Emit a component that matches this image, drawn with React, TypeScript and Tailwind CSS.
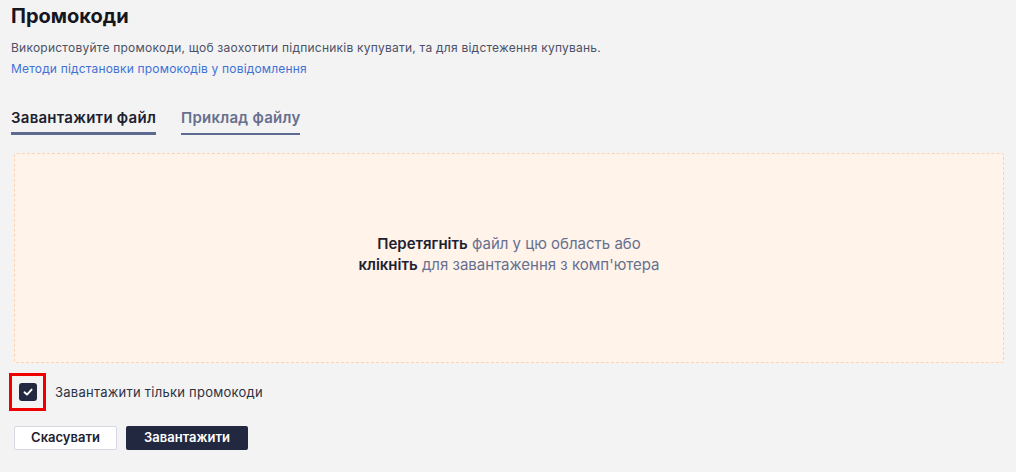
import { useState } from 'react';

const tabs = ['Завантажити файл', 'Приклад файлу'];

const CheckIcon = () => (
  <svg width="12" height="12" viewBox="0 0 12 12" fill="none">
    <path
      d="M2.5 6.3 L5 8.6 L9.6 3.6"
      stroke="#ffffff"
      strokeWidth="1.9"
      strokeLinecap="round"
      strokeLinejoin="round"
    />
  </svg>
);

const App = () => {
  const [activeTab, setActiveTab] = useState(0);
  const [onlyCodes, setOnlyCodes] = useState(true);

  return (
    <div
      className="min-h-[472px] w-full bg-[#f3f3f3] px-[11px] pt-[2px] text-[#1d2130]"
      style={{ fontFamily: 'Inter, "Noto Sans", sans-serif' }}
    >
      <h1 className="text-[20px] font-bold leading-[28px] text-[#15171f]">Промокоди</h1>
      <p className="mt-[10px] text-[12px] leading-[16px] tracking-[0.24px] text-[#4b5166]">
        Використовуйте промокоди, щоб заохотити підписників купувати, та для
        відстеження купувань.
      </p>
      <a className="mt-[5px] block text-[12px] leading-[16px] tracking-[0.18px] text-[#3f72d6]">
        Методи підстановки промокодів у повідомлення
      </a>

      <div className="mt-[31px] flex">
        {tabs.map((tab, i) => (
          <button
            key={tab}
            onClick={() => setActiveTab(i)}
            className={`flex flex-col items-stretch ${i === 0 ? '' : 'pl-[25px]'} ${
              activeTab === i ? 'text-[#1d2130]' : 'text-[#66708f]'
            }`}
          >
            <span className="text-[15px] font-semibold leading-[20px] tracking-[0.25px]">
              {tab}
            </span>
            <span className="mt-[3px] flex h-[4px] items-end">
              <span
                className={`w-full bg-[#5e6b90] ${
                  activeTab === i ? 'h-[3px]' : 'h-[2px]'
                }`}
              />
            </span>
          </button>
        ))}
      </div>

      <div className="ml-[3px] mr-[1px] mt-[18px] flex h-[210px] flex-col items-center justify-center rounded-[3px] border border-dashed border-[#fbd3b2] bg-[#fff3ea] pb-[8px] text-[15px] leading-[21px]">
        <p>
          <span className="font-semibold text-[#1d2130]">Перетягніть</span>{' '}
          <span className="text-[#66708f]">файл у цю область або</span>
        </p>
        <p>
          <span className="font-semibold text-[#1d2130]">клікніть</span>{' '}
          <span className="text-[#66708f]">для завантаження з комп'ютера</span>
        </p>
      </div>

      <label className="mt-[10px] flex items-center gap-[9px]">
        <span className="-ml-[2px] flex h-[38px] w-[37px] items-center justify-center border-[3px] border-[#ee0000]">
          <span
            onClick={() => setOnlyCodes(!onlyCodes)}
            className={`flex h-[18px] w-[18px] items-center justify-center rounded-[3px] ${
              onlyCodes ? 'bg-[#222840]' : 'border border-[#9aa0b3] bg-white'
            }`}
          >
            {onlyCodes && <CheckIcon />}
          </span>
        </span>
        <span className="text-[13px] leading-[18px] tracking-[0.25px] text-[#2c3142]">
          Завантажити тільки промокоди
        </span>
      </label>

      <div className="ml-[3px] mt-[15px] flex gap-[9px]">
        <button className="h-[24px] w-[103px] rounded-[2px] border border-[#d6d9e2] bg-white text-[13px] font-semibold text-[#1d2130]">
          Скасувати
        </button>
        <button className="h-[24px] w-[122px] rounded-[2px] bg-[#222840] text-[13px] font-semibold text-white">
          Завантажити
        </button>
      </div>
    </div>
  );
};

export default App;
